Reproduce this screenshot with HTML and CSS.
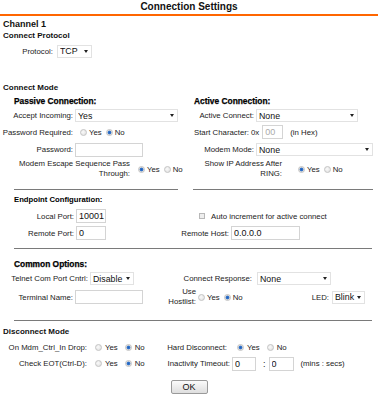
FILE: index.html
```html
<!DOCTYPE html>
<html lang="en">
<head>
    <meta charset="UTF-8">
    <title>Connection Settings</title>
    <link rel="stylesheet" href="styles.css">
</head>
<body>
    <div class="page-title">Connection Settings</div>

    <div class="channel">Channel 1</div>
    <div class="group-title">Connect Protocol</div>
    <div class="row protocol-row">
        <label class="lbl w53">Protocol:</label>
        <span class="select w35"><select><option>TCP</option></select></span>
    </div>

    <div class="group-title mode-title">Connect Mode</div>
    <div class="columns">
        <!-- Passive side -->
        <div class="col">
            <div class="section-head">Passive Connection:</div>
            <div class="row h15">
                <label class="lbl w73">Accept Incoming:</label>
                <span class="select w103"><select><option>Yes</option></select></span>
            </div>
            <div class="row h18">
                <label class="lbl w73">Password Required:</label>
                <span class="radios ml7">
                    <span class="radio"></span>Yes
                    <span class="radio on"></span>No
                </span>
            </div>
            <div class="row h17">
                <label class="lbl w73">Password:</label>
                <input class="field w68" type="text">
            </div>
            <div class="row h22">
                <label class="lbl wrap escape-lbl">Modem Escape Sequence Pass Through:</label>
                <span class="radios ml6">
                    <span class="radio on"></span>Yes
                    <span class="radio"></span>No
                </span>
            </div>
            <div class="rule left-rule"></div>
        </div>

        <!-- Active side -->
        <div class="col right-col">
            <div class="section-head">Active Connection:</div>
            <div class="row h15">
                <label class="lbl w73">Active Connect:</label>
                <span class="select w102"><select><option>None</option></select></span>
            </div>
            <div class="row h18">
                <label class="lbl w70">Start Character:</label>
                <span class="hex">0x</span>
                <input class="field hex-field" type="text" value="00">
                <span class="note">(in Hex)</span>
            </div>
            <div class="row h17">
                <label class="lbl w73">Modem Mode:</label>
                <span class="select w117"><select><option>None</option></select></span>
            </div>
            <div class="row h22">
                <label class="lbl wrap ip-lbl">Show IP Address After RING:</label>
                <span class="radios ml14">
                    <span class="radio on"></span>Yes
                    <span class="radio"></span>No
                </span>
            </div>
            <div class="rule right-rule"></div>
        </div>
    </div>

    <div class="section-head plain">Endpoint Configuration:</div>
    <div class="row h18">
        <div class="half">
            <label class="lbl w74">Local Port:</label>
            <input class="field w30" type="text" value="10001">
        </div>
        <div class="half check-part">
            <span class="check"></span>Auto increment for active connect
        </div>
    </div>
    <div class="row h16">
        <div class="half">
            <label class="lbl w74">Remote Port:</label>
            <input class="field w30" type="text" value="0">
        </div>
        <div class="half">
            <label class="lbl w48">Remote Host:</label>
            <input class="field w69" type="text" value="0.0.0.0">
        </div>
    </div>
    <div class="rule full-rule endpoint-rule"></div>

    <div class="section-head common-head">Common Options:</div>
    <div class="row h15">
        <div class="half">
            <label class="lbl w88">Telnet Com Port Cntrl:</label>
            <span class="select w44"><select><option>Disable</option></select></span>
        </div>
        <div class="half">
            <label class="lbl w71">Connect Response:</label>
            <span class="select w74 ml3"><select><option>None</option></select></span>
        </div>
    </div>
    <div class="row h22">
        <label class="lbl w73">Terminal Name:</label>
        <input class="field w68" type="text">
        <label class="lbl wrap hostlist-lbl">Use Hostlist:</label>
        <span class="radios ml2">
            <span class="radio"></span>Yes
            <span class="radio on"></span>No
        </span>
        <span class="led">
            <label class="lbl">LED:</label>
            <span class="select w33 ml3"><select><option>Blink</option></select></span>
        </span>
    </div>
    <div class="rule full-rule common-rule"></div>

    <div class="group-title disc-title">Disconnect Mode</div>
    <div class="row h17">
        <div class="disc-left">
            <label class="lbl w87">On Mdm_Ctrl_In Drop:</label>
            <span class="radios wide ml6">
                <span class="radio"></span>Yes
                <span class="radio on"></span>No
            </span>
        </div>
        <label class="lbl w62">Hard Disconnect:</label>
        <span class="radios wide ml8">
            <span class="radio on"></span>Yes
            <span class="radio"></span>No
        </span>
    </div>
    <div class="row h15">
        <div class="disc-left">
            <label class="lbl w87">Check EOT(Ctrl-D):</label>
            <span class="radios wide ml6">
                <span class="radio"></span>Yes
                <span class="radio on"></span>No
            </span>
        </div>
        <label class="lbl w65">Inactivity Timeout:</label>
        <input class="field w24" type="text" value="0">
        <span class="colon">:</span>
        <input class="field w25" type="text" value="0">
        <span class="note ml3">(mins : secs)</span>
    </div>

    <div class="actions">
        <button class="ok-btn" type="button">OK</button>
    </div>
</body>
</html>
```

FILE: styles.css
```css
* {
    margin: 0;
    padding: 0;
    box-sizing: border-box;
}

body {
    font-family: "Liberation Sans", Arial, sans-serif;
    font-size: 7.8px;
    color: #222;
    background: #fff;
    width: 378px;
}

.page-title {
    height: 16px;
    line-height: 14px;
    text-align: center;
    font-size: 10px;
    font-weight: bold;
    color: #111;
    border-bottom: 2px solid #ff6600;
}

.channel {
    margin-top: 2px;
    padding-left: 3px;
    line-height: 12px;
    font-size: 9px;
    font-weight: bold;
    color: #111;
}

.group-title {
    padding-left: 3px;
    line-height: 12px;
    font-size: 8px;
    font-weight: bold;
    color: #111;
}

.mode-title {
    margin-top: 22px;
}

.disc-title {
    margin-top: 4px;
    line-height: 14px;
}

.section-head {
    padding-left: 14px;
    line-height: 14px;
    font-size: 8.4px;
    font-weight: bold;
    color: #000;
    -webkit-text-stroke: 0.25px #000;
}

.section-head.plain {
    margin-top: 3px;
    font-size: 7.7px;
    -webkit-text-stroke: 0;
}

.common-head {
    margin-top: 8px;
}

.columns {
    display: flex;
}

.col {
    width: 181px;
}

.right-col {
    width: 197px;
}

.right-col .section-head {
    padding-left: 13px;
}

.row {
    display: flex;
    align-items: center;
}

.protocol-row {
    height: 18px;
}

.h15 { height: 15px; }
.h16 { height: 16px; }
.h17 { height: 17px; }
.h18 { height: 18px; }
.h22 { height: 22px; }

.lbl {
    flex: none;
    text-align: right;
    white-space: nowrap;
    margin-right: 2px;
}

.lbl.wrap {
    white-space: normal;
    line-height: 10.5px;
}

.w24 { width: 24px; }
.w25 { width: 25px; }
.w30 { width: 30px; }
.w33 { width: 33px; }
.w35 { width: 35px; }
.w44 { width: 44px; }
.w48 { width: 48px; }
.w53 { width: 53px; margin-right: 4px; }
.w62 { width: 62px; }
.w65 { width: 65px; }
.w68 { width: 68px; }
.w69 { width: 69px; }
.w70 { width: 68px; margin-right: 2px; }
.w71 { width: 71px; }
.w73 { width: 73px; }
.w74 { width: 74px; }
.w87 { width: 87px; }
.w88 { width: 88px; }
.w102 { width: 102px; }
.w103 { width: 103px; }
.w117 { width: 117px; }

.ml2 { margin-left: 2px; }
.ml3 { margin-left: 3px; }
.ml6 { margin-left: 6px; }
.ml7 { margin-left: 5px; }
.ml8 { margin-left: 8px; }
.ml14 { margin-left: 14px; }

.escape-lbl {
    width: 116px;
    margin-left: 14px;
}

.ip-lbl {
    width: 82px;
    margin-left: 19px;
}

.hostlist-lbl {
    width: 34px;
    margin-left: 19px;
    margin-right: 0;
}

/* select boxes */
.select {
    position: relative;
    display: inline-block;
    flex: none;
    height: 13px;
    background: #fff;
    border: 1px solid #e2e2e2;
}

.select select {
    appearance: none;
    -webkit-appearance: none;
    width: 100%;
    height: 100%;
    border: none;
    background: transparent;
    font-family: "Liberation Sans", Arial, sans-serif;
    font-size: 8.8px;
    color: #111;
    padding-left: 2px;
    outline: none;
}

.select::after {
    content: "";
    position: absolute;
    right: 3px;
    top: 4px;
    border-left: 2.5px solid transparent;
    border-right: 2.5px solid transparent;
    border-top: 3px solid #222;
}

/* text fields */
.field {
    flex: none;
    height: 14px;
    border: 1px solid #d4d4d4;
    background: #fff;
    font-family: "Liberation Sans", Arial, sans-serif;
    font-size: 9px;
    color: #111;
    padding-left: 2px;
    outline: none;
}

.hex {
    margin-right: 3px;
}

.hex-field {
    width: 21px;
    color: #aaa;
}

.note {
    margin-left: 7px;
}

.colon {
    margin: 0 3px 0 7px;
    font-size: 9px;
}

/* radios and checkbox */
.radios {
    display: flex;
    align-items: center;
    white-space: nowrap;
}

.radio {
    display: inline-block;
    width: 7px;
    height: 7px;
    border-radius: 50%;
    border: 1px solid #c4c4c4;
    background: radial-gradient(circle at 40% 40%, #fafafa, #dcdcdc);
    margin-right: 2px;
    margin-left: 4px;
}

.radios .radio:first-child {
    margin-left: 0;
}

.radio.on {
    background: radial-gradient(circle, #1f5fb8 0, #3a7ad0 1.6px, #dcdcdc 2.2px, #f2f2f2 100%);
}

.radios.wide .radio {
    margin-right: 3px;
    margin-left: 7px;
}

.radios.wide .radio:first-child {
    margin-left: 0;
}

.check {
    display: inline-block;
    width: 6px;
    height: 6px;
    border: 1px solid #b8b8b8;
    background: #eee;
    margin-right: 6px;
}

.half {
    display: flex;
    align-items: center;
    width: 181px;
}

.check-part {
    padding-left: 18px;
}

.led {
    display: flex;
    align-items: center;
    margin-left: auto;
    margin-right: 13px;
}

.led .lbl {
    margin-right: 0;
}

.disc-left {
    display: flex;
    align-items: center;
    width: 165px;
}

/* separators */
.rule {
    height: 1px;
    background: #7a7a7a;
}

.left-rule {
    margin: 9px 3px 0 14px;
}

.right-rule {
    margin: 9px 5px 0 12px;
}

.full-rule {
    margin-left: 14px;
    margin-right: 6px;
}

.endpoint-rule {
    margin-top: 7px;
}

.common-rule {
    margin-top: 12px;
}

.actions {
    margin-top: 9px;
    text-align: center;
}

.ok-btn {
    width: 37px;
    height: 14px;
    font-family: "Liberation Sans", Arial, sans-serif;
    font-size: 9px;
    color: #111;
    border: 1px solid #9a9a9a;
    border-radius: 2px;
    background: linear-gradient(#fbfbfb, #dedede);
}
```
